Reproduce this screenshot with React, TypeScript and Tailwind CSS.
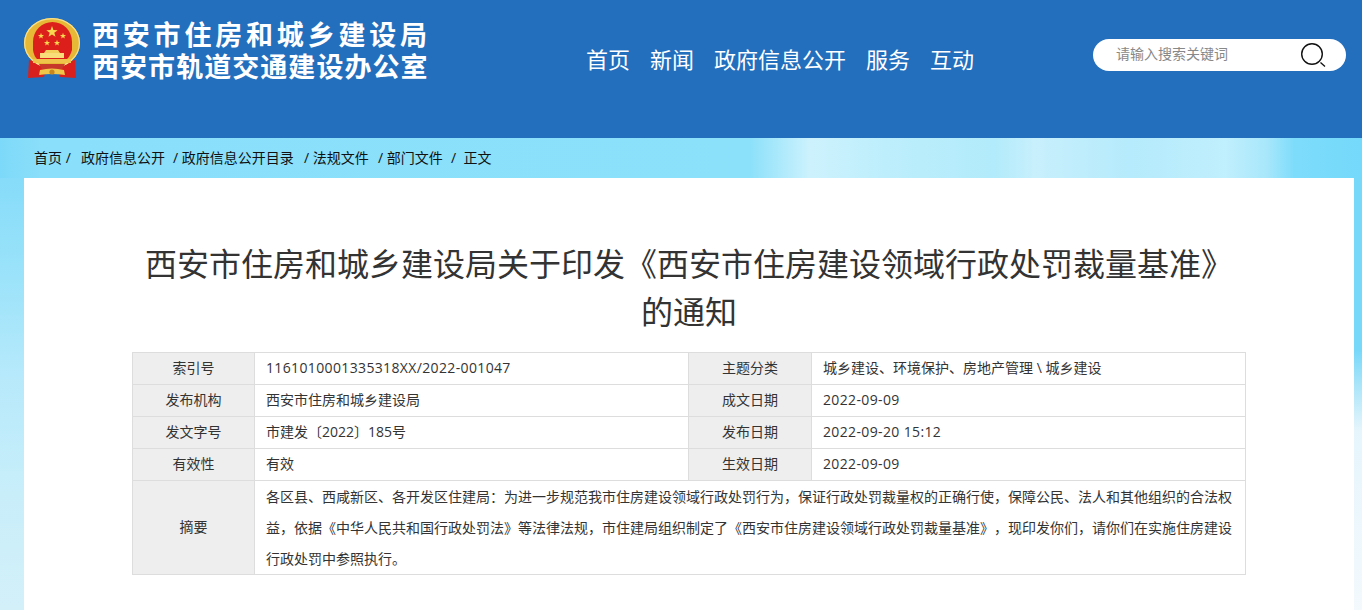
const navItems = ["首页", "新闻", "政府信息公开", "服务", "互动"];

const crumbs = [
  { label: "首页 /", cls: "w-[47px]" },
  { label: "政府信息公开", cls: "w-[92px]" },
  { label: "/ 政府信息公开目录", cls: "w-[131px]" },
  { label: "/ 法规文件", cls: "w-[74px]" },
  { label: "/ 部门文件", cls: "w-[73px]" },
  { label: "/  正文", cls: "" },
];

const rows = [
  ["索引号", "1161010001335318XX/2022-001047", "主题分类", "城乡建设、环境保护、房地产管理 \\ 城乡建设"],
  ["发布机构", "西安市住房和城乡建设局", "成文日期", "2022-09-09"],
  ["发文字号", "市建发〔2022〕185号", "发布日期", "2022-09-20 15:12"],
  ["有效性", "有效", "生效日期", "2022-09-09"],
];

// digit-only values run a little wider than the font's own spacing
const valueClass = (v: string) =>
  /^[\dX\-/: ]+$/.test(v)
    ? "border border-[#dddddd] px-[11px] pb-[2px] tracking-[0.36px]"
    : "border border-[#dddddd] px-[11px] pb-[2px]";

function Star({ x, y, r }: { x: number; y: number; r: number }) {
  const pts = Array.from({ length: 10 }, (_, i) => {
    const a = -Math.PI / 2 + (i * Math.PI) / 5;
    const d = i % 2 === 0 ? r : r * 0.4;
    return `${(x + d * Math.cos(a)).toFixed(2)},${(y + d * Math.sin(a)).toFixed(2)}`;
  }).join(" ");
  return <polygon points={pts} fill="#f8d84e" />;
}

function Emblem() {
  return (
    <svg width="58" height="62" viewBox="0 0 58 62" className="shrink-0">
      <path d="M6 42 L5 60 L21 59 L24 46 Z" fill="#d9201c" />
      <path d="M52 42 L53 60 L37 59 L34 46 Z" fill="#d9201c" />
      <ellipse cx="29" cy="25" rx="28" ry="25" fill="#e7b736" />
      <ellipse cx="29" cy="25" rx="27.4" ry="24.4" fill="none" stroke="#f8e08a" strokeWidth="1.2" />
      <path d="M10 24 A19.5 20 0 0 1 49 24 L49 32 Q47 39 43 42 H15 Q11 39 10 32 Z" fill="#dc1f1b" />
      <Star x={29} y={14} r={6} />
      <Star x={18} y={18} r={3.2} />
      <Star x={40} y={18} r={3.2} />
      <Star x={24} y={25} r={3.2} />
      <Star x={34} y={25} r={3.2} />
      <path d="M23 32 H35 L37 35 H21 Z" fill="#f3cf5c" />
      <rect x="17" y="35" width="24" height="5" fill="#f8dd78" />
      <rect x="10" y="41" width="38" height="4" fill="#efc24a" />
      <path d="M16 46 H42 L39 51 H19 Z" fill="#c8382a" />
      <path d="M17 52 Q29 49 41 52 L42 57 Q29 55 16 57 Z" fill="#efc648" />
      <circle cx="29" cy="54" r="2.6" fill="#c9871f" />
    </svg>
  );
}

export default function App() {
  return (
    <div className="h-[610px] overflow-hidden bg-[#ffffff] font-['Open_Sans','Noto_Sans_CJK_SC','Liberation_Sans',sans-serif] [text-spacing-trim:space-all]">
      {/* Header */}
      <header className="h-[138px] bg-[#236fbd] flex items-start text-white">
        <div className="w-[1093px] flex items-start shrink-0">
          <div className="ml-[23px] mt-[18px]">
            <Emblem />
          </div>
          <div className="ml-[11px] mt-[19px] w-[341px] font-bold text-[27px] leading-[32px]">
            <div className="tracking-[3.8px] whitespace-nowrap">西安市住房和城乡建设局</div>
            <div className="tracking-[1.05px] whitespace-nowrap">西安市轨道交通建设办公室</div>
          </div>
          <nav className="ml-[153px] mt-[43px] flex gap-5 text-[22px] leading-[32px]">
            {navItems.map((item) => (
              <a key={item} className="whitespace-nowrap">
                {item}
              </a>
            ))}
          </nav>
        </div>
        <div className="mt-[39px] w-[253px] h-8 rounded-full bg-white flex items-center pl-[23px] pr-5 justify-between">
          <span className="text-sm leading-[20px] pb-[2px] text-[#888888]">请输入搜索关键词</span>
          <svg width="25" height="25" viewBox="0 0 25 25" fill="none" stroke="#111" strokeWidth="1.4">
            <circle cx="11" cy="11" r="10.3" />
            <path d="M19.5 19.5 L24 23.5" />
          </svg>
        </div>
      </header>

      {/* Sky background */}
      <div className="h-[472px] [background:linear-gradient(90deg,#7dd9f9_0%,#8adffa_3%,#8be0fa_55%,#cdf2fd_59.5%,#bdeefc_65%,#b2ebfb_73%,#c8effc_76%,#b5ebfc_83%,#c0effd_90%,#a8e7fb_93%,#7edcfb_95%,#74d9fb_100%)_0_0/100%_40px_no-repeat,linear-gradient(180deg,#7dd9f9_0%,#9ce3fa_30%,#b6e9fb_50%,#c8eefa_75%,#d3f0f9_100%)_0_0/24px_100%_no-repeat,linear-gradient(180deg,#78d8fa_0%,#78d8fa_45%,#a8e4f9_52%,#e6f5fc_62%,#f3f9fd_100%)_100%_0/8px_100%_no-repeat]">
        <div className="h-10 pl-[34px] pb-[1px] flex items-center text-sm text-[#111111] whitespace-pre">
          {crumbs.map((c) => (
            <span key={c.label} className={c.cls}>
              {c.label}
            </span>
          ))}
        </div>
        <main className="ml-6 w-[1330px] h-[432px] bg-white pt-[62px]">
          <h1 className="w-[1114px] ml-[108px] text-center text-[32px] leading-[48px] text-[#333333]">
            西安市住房和城乡建设局关于印发《西安市住房建设领域行政处罚裁量基准》的通知
          </h1>
          <table className="mt-4 ml-[108px] w-[1114px] table-fixed border-collapse text-sm text-[#333333]">
            <colgroup>
              <col className="w-[122px]" />
              <col className="w-[434px]" />
              <col className="w-[123px]" />
              <col />
            </colgroup>
            <tbody>
              {rows.map((r) => (
                <tr key={r[0]} className="h-8">
                  <td className="border border-[#dddddd] bg-[#eeeeee] text-center pb-[2px]">{r[0]}</td>
                  <td className={valueClass(r[1])}>{r[1]}</td>
                  <td className="border border-[#dddddd] bg-[#eeeeee] text-center pb-[2px]">{r[2]}</td>
                  <td className={valueClass(r[3])}>{r[3]}</td>
                </tr>
              ))}
              <tr>
                <td className="border border-[#dddddd] bg-[#eeeeee] text-center pb-[2px]">摘要</td>
                <td colSpan={3} className="border border-[#dddddd] px-[11px] leading-[31px]">
                  各区县、西咸新区、各开发区住建局：为进一步规范我市住房建设领域行政处罚行为，保证行政处罚裁量权的正确行使，保障公民、法人和其他组织的合法权益，依据《中华人民共和国行政处罚法》等法律法规，市住建局组织制定了《西安市住房建设领域行政处罚裁量基准》，现印发你们，请你们在实施住房建设行政处罚中参照执行。
                </td>
              </tr>
            </tbody>
          </table>
        </main>
      </div>
    </div>
  );
}
